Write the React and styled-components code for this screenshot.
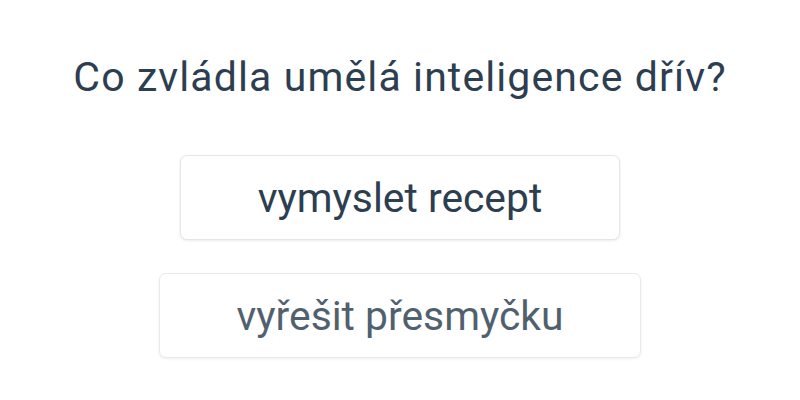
import styled, { createGlobalStyle } from "styled-components";

const GlobalStyle = createGlobalStyle`
  body {
    margin: 0;
    background: #ffffff;
    font-family: Roboto, "Liberation Sans", sans-serif;
  }
`;

const Page = styled.div`
  width: 800px;
  height: 400px;
  display: flex;
  flex-direction: column;
  align-items: center;
  padding-top: 51px;
  box-sizing: border-box;
`;

const Question = styled.h1`
  margin: 0 0 52px;
  font-size: 41px;
  font-weight: 400;
  line-height: 52px;
  letter-spacing: 1.1px;
  color: #2c3e50;
`;

const Answers = styled.div`
  display: flex;
  flex-direction: column;
  align-items: center;
  gap: 33px;
`;

const Answer = styled.button`
  height: 85px;
  padding: 0 77px;
  background: #fff;
  border: 1px solid #e4e6e9;
  border-radius: 7px;
  box-shadow: 0 1px 3px rgba(0, 0, 0, 0.08);
  font-family: inherit;
  font-size: 40.8px;
  color: #2c3e50;
  opacity: ${(p) => (p.$fading ? 0.82 : 1)};
  cursor: pointer;
`;

export default function App() {
  return (
    <>
      <GlobalStyle />
      <Page>
        <Question>Co zvládla umělá inteligence dřív?</Question>
        <Answers>
          <Answer>vymyslet recept</Answer>
          <Answer $fading>vyřešit přesmyčku</Answer>
        </Answers>
      </Page>
    </>
  );
}
